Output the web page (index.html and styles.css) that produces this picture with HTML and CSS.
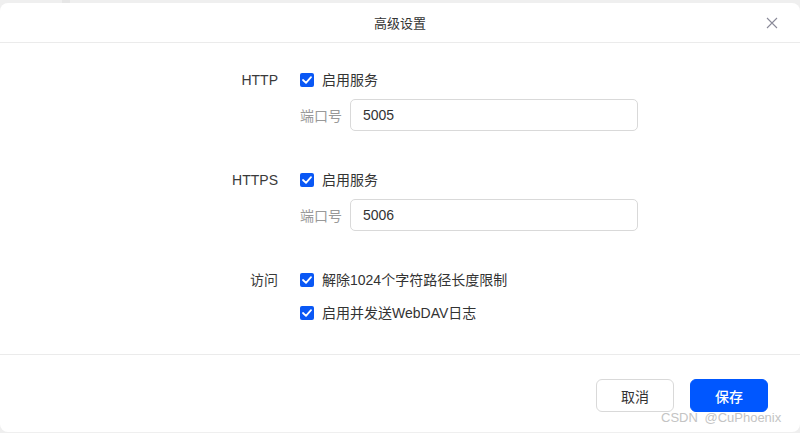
FILE: index.html
```html
<!DOCTYPE html>
<html lang="zh-CN">
<head>
<meta charset="utf-8">
<title>高级设置</title>
<link rel="stylesheet" href="styles.css">
</head>
<body>
<div class="backdrop">
  <div class="strip"></div>
  <div class="dialog">
    <div class="dialog-header">
      <span class="dialog-title">高级设置</span>
      <button class="close" aria-label="关闭">
        <svg width="12" height="12" viewBox="0 0 12 12"><path d="M1 1L11 11M11 1L1 11" stroke="#8a8a99" stroke-width="1.1" fill="none"/></svg>
      </button>
    </div>
    <div class="dialog-body">
      <div class="form">
        <div class="section">
          <div class="label">HTTP</div>
          <div class="controls">
            <label class="check"><span class="box"><svg width="10" height="8" viewBox="0 0 10 8"><path d="M1 4L4 6.8L9 1.2" stroke="#fff" stroke-width="1.8" fill="none" stroke-linecap="round" stroke-linejoin="round"/></svg></span>启用服务</label>
            <div class="port"><span class="port-label">端口号</span><div class="input">5005</div></div>
          </div>
        </div>
        <div class="section">
          <div class="label">HTTPS</div>
          <div class="controls">
            <label class="check"><span class="box"><svg width="10" height="8" viewBox="0 0 10 8"><path d="M1 4L4 6.8L9 1.2" stroke="#fff" stroke-width="1.8" fill="none" stroke-linecap="round" stroke-linejoin="round"/></svg></span>启用服务</label>
            <div class="port"><span class="port-label">端口号</span><div class="input">5006</div></div>
          </div>
        </div>
        <div class="section">
          <div class="label">访问</div>
          <div class="controls">
            <label class="check"><span class="box"><svg width="10" height="8" viewBox="0 0 10 8"><path d="M1 4L4 6.8L9 1.2" stroke="#fff" stroke-width="1.8" fill="none" stroke-linecap="round" stroke-linejoin="round"/></svg></span>解除1024个字符路径长度限制</label>
            <label class="check check-gap"><span class="box"><svg width="10" height="8" viewBox="0 0 10 8"><path d="M1 4L4 6.8L9 1.2" stroke="#fff" stroke-width="1.8" fill="none" stroke-linecap="round" stroke-linejoin="round"/></svg></span>启用并发送WebDAV日志</label>
          </div>
        </div>
      </div>
    </div>
    <div class="dialog-footer">
      <button class="btn btn-default">取消</button>
      <button class="btn btn-primary">保存</button>
    </div>
  </div>
  <div class="watermark">CSDN @CuPhoenix</div>
</div>
</body>
</html>
```

FILE: styles.css
```css
* { box-sizing: border-box; }
html, body {
  margin: 0;
  padding: 0;
  width: 800px;
  height: 433px;
  overflow: hidden;
  background: #efefef;
  font-family: "Liberation Sans", "Noto Sans CJK SC", sans-serif;
  color: #333;
  font-size: 14px;
}
.backdrop {
  position: relative;
  width: 800px;
  height: 433px;
  padding-top: 3px;
}
.strip {
  position: absolute;
  left: 62px;
  top: 0;
  width: 8px;
  height: 3px;
  background: #e6e6e6;
}
.dialog {
  position: relative;
  background: #fff;
  border-radius: 8px;
  height: 429px;
  display: flex;
  flex-direction: column;
}
.dialog-header {
  height: 40px;
  border-bottom: 1px solid #ebebeb;
  display: flex;
  align-items: center;
  justify-content: center;
  position: relative;
}
.dialog-title {
  font-size: 13px;
  color: #333;
}
.close {
  position: absolute;
  right: 22px;
  top: 14px;
  width: 12px;
  height: 12px;
  padding: 0;
  border: 0;
  background: none;
  display: flex;
}
.dialog-body {
  flex: 1;
  padding-top: 26px;
  border-bottom: 1px solid #ebebeb;
}
.form {
  margin-left: 208px;
  width: 430px;
  display: flex;
  flex-direction: column;
  gap: 38px;
}
.section {
  display: flex;
  gap: 22px;
}
.label {
  width: 70px;
  text-align: right;
  line-height: 22px;
  height: 22px;
  color: #3a3a3a;
}
.controls {
  flex: 1;
  display: flex;
  flex-direction: column;
}
.check {
  display: flex;
  align-items: center;
  height: 22px;
  line-height: 22px;
  color: #333;
}
.check-gap { margin-top: 11px; }
.box {
  width: 14px;
  height: 14px;
  border-radius: 2px;
  background: #0a58f5;
  margin-right: 8px;
  display: flex;
  align-items: center;
  justify-content: center;
}
.port {
  margin-top: 8px;
  display: flex;
  align-items: center;
}
.port-label {
  color: #999;
  width: 50px;
}
.input {
  flex: 1;
  height: 32px;
  border: 1px solid #d9d9d9;
  border-radius: 5px;
  padding-left: 12px;
  line-height: 30px;
  color: #333;
}
.dialog-footer {
  height: 77px;
  display: flex;
  justify-content: flex-end;
  align-items: flex-start;
  padding-top: 24px;
  padding-right: 32px;
  gap: 16px;
}
.btn {
  width: 78px;
  height: 33px;
  border-radius: 6px;
  font-family: "Liberation Sans", "Noto Sans CJK SC", sans-serif;
  font-size: 14px;
  padding: 0;
}
.btn-default {
  background: #fff;
  border: 1px solid #d9d9d9;
  color: #333;
}
.btn-primary {
  background: #0057ff;
  border: 1px solid #0057ff;
  color: #fff;
  font-weight: 500;
}
.watermark {
  position: absolute;
  left: 661px;
  top: 410px;
  font-size: 13px;
  color: #c4c4c4;
  word-spacing: 3px;
}
```
